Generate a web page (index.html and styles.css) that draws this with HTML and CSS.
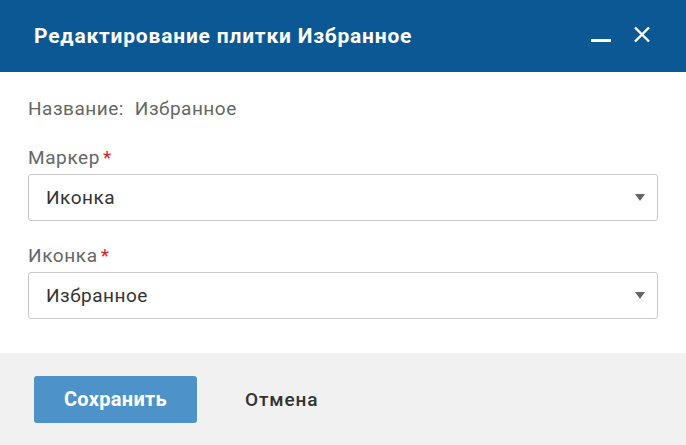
FILE: index.html
```html
<!DOCTYPE html>
<html lang="ru">
<head>
<meta charset="utf-8">
<link rel="stylesheet" href="styles.css">
</head>
<body>
<div class="dialog">
  <header class="dlg-header">
    <h1 class="dlg-title">Редактирование плитки Избранное</h1>
    <div class="dlg-tools">
      <button class="tool tool-min" aria-label="Свернуть">
        <svg width="20" height="20" viewBox="0 0 20 20"><rect x="0" y="13" width="20" height="3" fill="#fff"/></svg>
      </button>
      <button class="tool tool-close" aria-label="Закрыть">
        <svg width="18" height="18" viewBox="0 0 18 18"><path d="M2 1.5 L16 15.5 M16 1.5 L2 15.5" stroke="#fff" stroke-width="2.4" stroke-linecap="butt"/></svg>
      </button>
    </div>
  </header>
  <main class="dlg-body">
    <div class="name-row"><span class="name-label">Название:</span><span class="name-value">Избранное</span></div>
    <div class="field">
      <label class="field-label">Маркер<span class="req">*</span></label>
      <div class="select"><span class="select-value">Иконка</span><span class="caret"></span></div>
    </div>
    <div class="field">
      <label class="field-label">Иконка<span class="req">*</span></label>
      <div class="select"><span class="select-value">Избранное</span><span class="caret"></span></div>
    </div>
  </main>
  <footer class="dlg-footer">
    <button class="btn btn-primary">Сохранить</button>
    <button class="btn btn-link">Отмена</button>
  </footer>
</div>
</body>
</html>
```

FILE: styles.css
```css
html, body {
  margin: 0;
  padding: 0;
  background: #fff;
}
body {
  font-family: Roboto, "Noto Sans", sans-serif;
  width: 686px;
  height: 445px;
  overflow: hidden;
}
.dialog {
  display: flex;
  flex-direction: column;
  height: 445px;
}
.dlg-header {
  height: 72px;
  background: #0b5895;
  display: flex;
  align-items: center;
  padding: 0 34px 0 34px;
  box-sizing: border-box;
}
.dlg-title {
  margin: 0;
  flex: 1;
  color: #fff;
  font-size: 21px;
  font-weight: 700;
  letter-spacing: 0.8px;
}
.dlg-tools {
  display: flex;
  align-items: center;
  gap: 22px;
  margin-right: 1px;
}
.tool {
  background: none;
  border: 0;
  padding: 0;
  display: block;
  cursor: pointer;
}
.tool svg { display: block; }
.tool-close { margin-top: -2px; }
.dlg-body {
  flex: 1;
  padding: 0 28px;
}
.name-row {
  margin-top: 26px;
  font-size: 19px;
  line-height: 22px;
  letter-spacing: 0.5px;
  color: #666;
}
.name-value { margin-left: 11px; }
.field { margin-top: 24px; }
.name-row + .field { margin-top: 27px; }
.field-label {
  display: block;
  font-size: 19px;
  line-height: 22px;
  letter-spacing: 0.6px;
  color: #666;
  margin-bottom: 5px;
}
.req {
  color: #e02020;
  margin-left: 3px;
}
.select {
  height: 47px;
  box-sizing: border-box;
  border: 1px solid #c8c8c8;
  border-radius: 3px;
  display: flex;
  align-items: center;
  padding: 0 12px 0 17px;
}
.select-value {
  flex: 1;
  font-size: 19px;
  letter-spacing: 0.5px;
  color: #333;
}
.caret {
  width: 0;
  height: 0;
  border-left: 5px solid transparent;
  border-right: 5px solid transparent;
  border-top: 7px solid #666;
}
.dlg-footer {
  height: 92px;
  background: #f1f1f1;
  display: flex;
  align-items: center;
  padding: 0 34px;
  gap: 48px;
}
.btn {
  font-family: Roboto, "Noto Sans", sans-serif;
  border: 0;
  cursor: pointer;
}
.btn-primary {
  width: 163px;
  height: 47px;
  background: #4d93ca;
  color: #fff;
  font-size: 20px;
  font-weight: 700;
  letter-spacing: 0.3px;
  border-radius: 3px;
}
.btn-link {
  background: none;
  padding: 0;
  color: #333;
  font-size: 19px;
  font-weight: 500;
  letter-spacing: 0.9px;
}
```
